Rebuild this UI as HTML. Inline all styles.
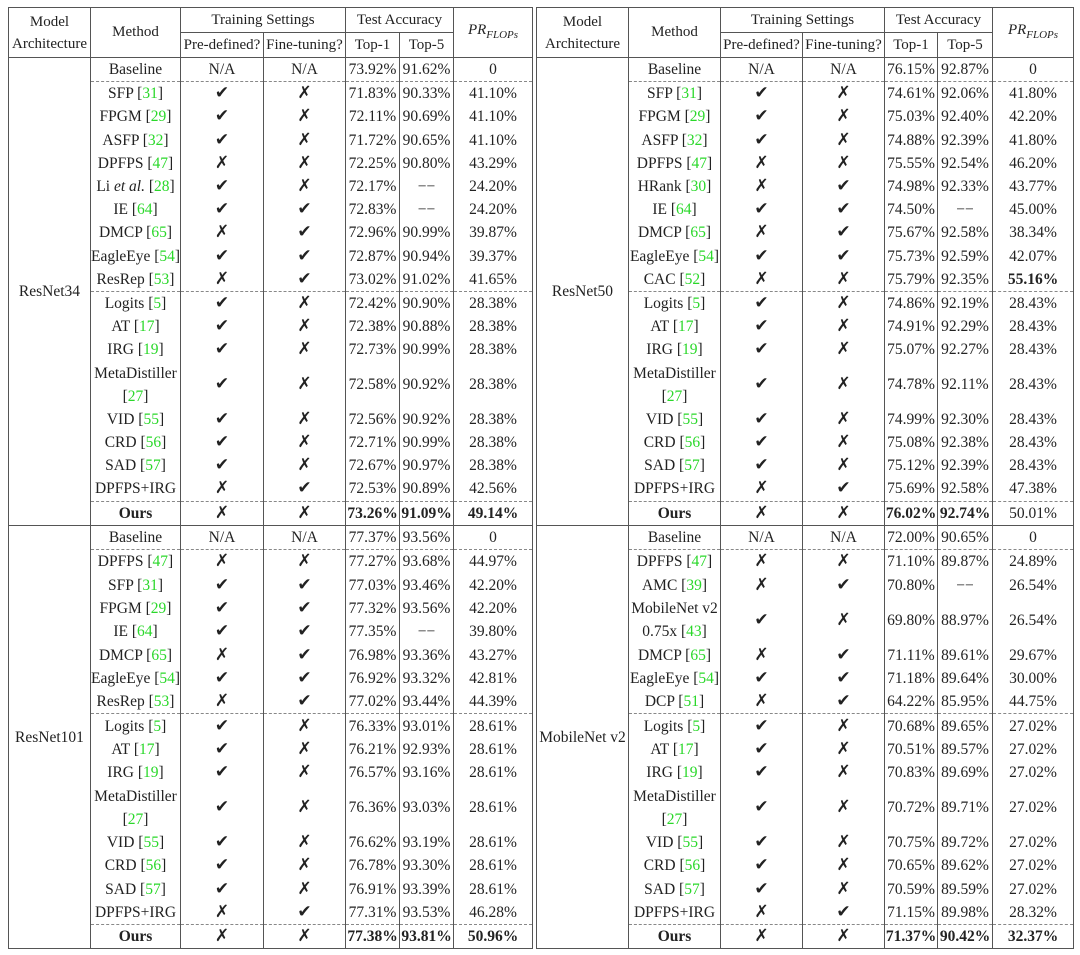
<!DOCTYPE html>
<html><head><meta charset="utf-8"><style>
body{margin:0;width:1080px;height:955px;background:#fff;position:relative;overflow:hidden;font-family:"Liberation Serif",serif;font-size:15.5px;color:#222}
table{position:absolute;border-collapse:collapse;table-layout:fixed}
td{border-left:1px solid #555;border-right:1px solid #555;text-align:center;vertical-align:middle;padding:0;white-space:nowrap;line-height:23px;overflow:visible}
tr.r td{height:23.2px}
tr.m td{height:46.4px}
.b tr.r td{height:23.3px}
.b tr.m td{height:46.6px}
tr.h td{border-top:1px solid #555;border-bottom:1px solid #555;height:24px;font-size:15px}
tr.d td{border-top:1.5px dashed #888}
tr.d td.mod{border-top:none}
td.mod{border-bottom:1px solid #555}
.g{color:#2ad82a}
.c,.x{font-family:"DejaVu Sans",sans-serif;font-size:17px;font-weight:bold;font-style:italic}
.bo{font-weight:bold}
table{border:1px solid #555}
.pr{font-style:italic;font-size:16px}
.pr sub{font-size:11px}
</style></head><body>

<!-- top-left -->
<table style="left:8px;top:7px;width:524px">
<colgroup><col style="width:82px"><col style="width:90px"><col style="width:83px"><col style="width:82px"><col style="width:54px"><col style="width:54px"><col style="width:79px"></colgroup>
<tr class="h"><td rowspan="2" style="line-height:22px">Model<br>Architecture</td><td rowspan="2">Method</td><td colspan="2">Training Settings</td><td colspan="2">Test Accuracy</td><td rowspan="2" class="pr">PR<sub>FLOPs</sub></td></tr>
<tr class="h"><td>Pre-defined?</td><td>Fine-tuning?</td><td>Top-1</td><td>Top-5</td></tr>
<tr class="r"><td rowspan="20" class="mod">ResNet34</td><td>Baseline</td><td>N/A</td><td>N/A</td><td>73.92%</td><td>91.62%</td><td>0</td></tr>
<tr class="r d"><td>SFP [<span class="g">31</span>]</td><td class="c">✔</td><td class="x">✗</td><td>71.83%</td><td>90.33%</td><td>41.10%</td></tr>
<tr class="r"><td>FPGM [<span class="g">29</span>]</td><td class="c">✔</td><td class="x">✗</td><td>72.11%</td><td>90.69%</td><td>41.10%</td></tr>
<tr class="r"><td>ASFP [<span class="g">32</span>]</td><td class="c">✔</td><td class="x">✗</td><td>71.72%</td><td>90.65%</td><td>41.10%</td></tr>
<tr class="r"><td>DPFPS [<span class="g">47</span>]</td><td class="x">✗</td><td class="x">✗</td><td>72.25%</td><td>90.80%</td><td>43.29%</td></tr>
<tr class="r"><td>Li <i>et al.</i> [<span class="g">28</span>]</td><td class="c">✔</td><td class="x">✗</td><td>72.17%</td><td>−−</td><td>24.20%</td></tr>
<tr class="r"><td>IE [<span class="g">64</span>]</td><td class="c">✔</td><td class="c">✔</td><td>72.83%</td><td>−−</td><td>24.20%</td></tr>
<tr class="r"><td>DMCP [<span class="g">65</span>]</td><td class="x">✗</td><td class="c">✔</td><td>72.96%</td><td>90.99%</td><td>39.87%</td></tr>
<tr class="r"><td>EagleEye [<span class="g">54</span>]</td><td class="c">✔</td><td class="c">✔</td><td>72.87%</td><td>90.94%</td><td>39.37%</td></tr>
<tr class="r"><td>ResRep [<span class="g">53</span>]</td><td class="x">✗</td><td class="c">✔</td><td>73.02%</td><td>91.02%</td><td>41.65%</td></tr>
<tr class="r d"><td>Logits [<span class="g">5</span>]</td><td class="c">✔</td><td class="x">✗</td><td>72.42%</td><td>90.90%</td><td>28.38%</td></tr>
<tr class="r"><td>AT [<span class="g">17</span>]</td><td class="c">✔</td><td class="x">✗</td><td>72.38%</td><td>90.88%</td><td>28.38%</td></tr>
<tr class="r"><td>IRG [<span class="g">19</span>]</td><td class="c">✔</td><td class="x">✗</td><td>72.73%</td><td>90.99%</td><td>28.38%</td></tr>
<tr class="m"><td>MetaDistiller<br>[<span class="g">27</span>]</td><td class="c">✔</td><td class="x">✗</td><td>72.58%</td><td>90.92%</td><td>28.38%</td></tr>
<tr class="r"><td>VID [<span class="g">55</span>]</td><td class="c">✔</td><td class="x">✗</td><td>72.56%</td><td>90.92%</td><td>28.38%</td></tr>
<tr class="r"><td>CRD [<span class="g">56</span>]</td><td class="c">✔</td><td class="x">✗</td><td>72.71%</td><td>90.99%</td><td>28.38%</td></tr>
<tr class="r"><td>SAD [<span class="g">57</span>]</td><td class="c">✔</td><td class="x">✗</td><td>72.67%</td><td>90.97%</td><td>28.38%</td></tr>
<tr class="r"><td>DPFPS+IRG</td><td class="x">✗</td><td class="c">✔</td><td>72.53%</td><td>90.89%</td><td>42.56%</td></tr>
<tr class="r d"><td class="bo">Ours</td><td class="x">✗</td><td class="x">✗</td><td class="bo">73.26%</td><td class="bo">91.09%</td><td class="bo">49.14%</td></tr>
</table>

<!-- top-right -->
<table style="left:536px;top:7px;width:537px">
<colgroup><col style="width:92px"><col style="width:92px"><col style="width:82px"><col style="width:82px"><col style="width:53px"><col style="width:55px"><col style="width:81px"></colgroup>
<tr class="h"><td rowspan="2" style="line-height:22px">Model<br>Architecture</td><td rowspan="2">Method</td><td colspan="2">Training Settings</td><td colspan="2">Test Accuracy</td><td rowspan="2" class="pr">PR<sub>FLOPs</sub></td></tr>
<tr class="h"><td>Pre-defined?</td><td>Fine-tuning?</td><td>Top-1</td><td>Top-5</td></tr>
<tr class="r"><td rowspan="20" class="mod">ResNet50</td><td>Baseline</td><td>N/A</td><td>N/A</td><td>76.15%</td><td>92.87%</td><td>0</td></tr>
<tr class="r d"><td>SFP [<span class="g">31</span>]</td><td class="c">✔</td><td class="x">✗</td><td>74.61%</td><td>92.06%</td><td>41.80%</td></tr>
<tr class="r"><td>FPGM [<span class="g">29</span>]</td><td class="c">✔</td><td class="x">✗</td><td>75.03%</td><td>92.40%</td><td>42.20%</td></tr>
<tr class="r"><td>ASFP [<span class="g">32</span>]</td><td class="c">✔</td><td class="x">✗</td><td>74.88%</td><td>92.39%</td><td>41.80%</td></tr>
<tr class="r"><td>DPFPS [<span class="g">47</span>]</td><td class="x">✗</td><td class="x">✗</td><td>75.55%</td><td>92.54%</td><td>46.20%</td></tr>
<tr class="r"><td>HRank [<span class="g">30</span>]</td><td class="x">✗</td><td class="c">✔</td><td>74.98%</td><td>92.33%</td><td>43.77%</td></tr>
<tr class="r"><td>IE [<span class="g">64</span>]</td><td class="c">✔</td><td class="c">✔</td><td>74.50%</td><td>−−</td><td>45.00%</td></tr>
<tr class="r"><td>DMCP [<span class="g">65</span>]</td><td class="x">✗</td><td class="c">✔</td><td>75.67%</td><td>92.58%</td><td>38.34%</td></tr>
<tr class="r"><td>EagleEye [<span class="g">54</span>]</td><td class="c">✔</td><td class="c">✔</td><td>75.73%</td><td>92.59%</td><td>42.07%</td></tr>
<tr class="r"><td>CAC [<span class="g">52</span>]</td><td class="x">✗</td><td class="x">✗</td><td>75.79%</td><td>92.35%</td><td class="bo">55.16%</td></tr>
<tr class="r d"><td>Logits [<span class="g">5</span>]</td><td class="c">✔</td><td class="x">✗</td><td>74.86%</td><td>92.19%</td><td>28.43%</td></tr>
<tr class="r"><td>AT [<span class="g">17</span>]</td><td class="c">✔</td><td class="x">✗</td><td>74.91%</td><td>92.29%</td><td>28.43%</td></tr>
<tr class="r"><td>IRG [<span class="g">19</span>]</td><td class="c">✔</td><td class="x">✗</td><td>75.07%</td><td>92.27%</td><td>28.43%</td></tr>
<tr class="m"><td>MetaDistiller<br>[<span class="g">27</span>]</td><td class="c">✔</td><td class="x">✗</td><td>74.78%</td><td>92.11%</td><td>28.43%</td></tr>
<tr class="r"><td>VID [<span class="g">55</span>]</td><td class="c">✔</td><td class="x">✗</td><td>74.99%</td><td>92.30%</td><td>28.43%</td></tr>
<tr class="r"><td>CRD [<span class="g">56</span>]</td><td class="c">✔</td><td class="x">✗</td><td>75.08%</td><td>92.38%</td><td>28.43%</td></tr>
<tr class="r"><td>SAD [<span class="g">57</span>]</td><td class="c">✔</td><td class="x">✗</td><td>75.12%</td><td>92.39%</td><td>28.43%</td></tr>
<tr class="r"><td>DPFPS+IRG</td><td class="x">✗</td><td class="c">✔</td><td>75.69%</td><td>92.58%</td><td>47.38%</td></tr>
<tr class="r d"><td class="bo">Ours</td><td class="x">✗</td><td class="x">✗</td><td class="bo">76.02%</td><td class="bo">92.74%</td><td>50.01%</td></tr>
</table>

<!-- bottom-left -->
<table class="b" style="left:8px;top:525px;width:524px">
<colgroup><col style="width:82px"><col style="width:90px"><col style="width:83px"><col style="width:82px"><col style="width:54px"><col style="width:54px"><col style="width:79px"></colgroup>
<tr class="r"><td rowspan="18" class="mod">ResNet101</td><td>Baseline</td><td>N/A</td><td>N/A</td><td>77.37%</td><td>93.56%</td><td>0</td></tr>
<tr class="r d"><td>DPFPS [<span class="g">47</span>]</td><td class="x">✗</td><td class="x">✗</td><td>77.27%</td><td>93.68%</td><td>44.97%</td></tr>
<tr class="r"><td>SFP [<span class="g">31</span>]</td><td class="c">✔</td><td class="c">✔</td><td>77.03%</td><td>93.46%</td><td>42.20%</td></tr>
<tr class="r"><td>FPGM [<span class="g">29</span>]</td><td class="c">✔</td><td class="c">✔</td><td>77.32%</td><td>93.56%</td><td>42.20%</td></tr>
<tr class="r"><td>IE [<span class="g">64</span>]</td><td class="c">✔</td><td class="c">✔</td><td>77.35%</td><td>−−</td><td>39.80%</td></tr>
<tr class="r"><td>DMCP [<span class="g">65</span>]</td><td class="x">✗</td><td class="c">✔</td><td>76.98%</td><td>93.36%</td><td>43.27%</td></tr>
<tr class="r"><td>EagleEye [<span class="g">54</span>]</td><td class="c">✔</td><td class="c">✔</td><td>76.92%</td><td>93.32%</td><td>42.81%</td></tr>
<tr class="r"><td>ResRep [<span class="g">53</span>]</td><td class="x">✗</td><td class="c">✔</td><td>77.02%</td><td>93.44%</td><td>44.39%</td></tr>
<tr class="r d"><td>Logits [<span class="g">5</span>]</td><td class="c">✔</td><td class="x">✗</td><td>76.33%</td><td>93.01%</td><td>28.61%</td></tr>
<tr class="r"><td>AT [<span class="g">17</span>]</td><td class="c">✔</td><td class="x">✗</td><td>76.21%</td><td>92.93%</td><td>28.61%</td></tr>
<tr class="r"><td>IRG [<span class="g">19</span>]</td><td class="c">✔</td><td class="x">✗</td><td>76.57%</td><td>93.16%</td><td>28.61%</td></tr>
<tr class="m"><td>MetaDistiller<br>[<span class="g">27</span>]</td><td class="c">✔</td><td class="x">✗</td><td>76.36%</td><td>93.03%</td><td>28.61%</td></tr>
<tr class="r"><td>VID [<span class="g">55</span>]</td><td class="c">✔</td><td class="x">✗</td><td>76.62%</td><td>93.19%</td><td>28.61%</td></tr>
<tr class="r"><td>CRD [<span class="g">56</span>]</td><td class="c">✔</td><td class="x">✗</td><td>76.78%</td><td>93.30%</td><td>28.61%</td></tr>
<tr class="r"><td>SAD [<span class="g">57</span>]</td><td class="c">✔</td><td class="x">✗</td><td>76.91%</td><td>93.39%</td><td>28.61%</td></tr>
<tr class="r"><td>DPFPS+IRG</td><td class="x">✗</td><td class="c">✔</td><td>77.31%</td><td>93.53%</td><td>46.28%</td></tr>
<tr class="r d"><td class="bo">Ours</td><td class="x">✗</td><td class="x">✗</td><td class="bo">77.38%</td><td class="bo">93.81%</td><td class="bo">50.96%</td></tr>
</table>

<!-- bottom-right -->
<table class="b" style="left:536px;top:525px;width:537px">
<colgroup><col style="width:92px"><col style="width:92px"><col style="width:82px"><col style="width:82px"><col style="width:53px"><col style="width:55px"><col style="width:81px"></colgroup>
<tr class="r"><td rowspan="16" class="mod">MobileNet v2</td><td>Baseline</td><td>N/A</td><td>N/A</td><td>72.00%</td><td>90.65%</td><td>0</td></tr>
<tr class="r d"><td>DPFPS [<span class="g">47</span>]</td><td class="x">✗</td><td class="x">✗</td><td>71.10%</td><td>89.87%</td><td>24.89%</td></tr>
<tr class="r"><td>AMC [<span class="g">39</span>]</td><td class="x">✗</td><td class="c">✔</td><td>70.80%</td><td>−−</td><td>26.54%</td></tr>
<tr class="m"><td>MobileNet v2<br>0.75x [<span class="g">43</span>]</td><td class="c">✔</td><td class="x">✗</td><td>69.80%</td><td>88.97%</td><td>26.54%</td></tr>
<tr class="r"><td>DMCP [<span class="g">65</span>]</td><td class="x">✗</td><td class="c">✔</td><td>71.11%</td><td>89.61%</td><td>29.67%</td></tr>
<tr class="r"><td>EagleEye [<span class="g">54</span>]</td><td class="c">✔</td><td class="c">✔</td><td>71.18%</td><td>89.64%</td><td>30.00%</td></tr>
<tr class="r"><td>DCP [<span class="g">51</span>]</td><td class="x">✗</td><td class="c">✔</td><td>64.22%</td><td>85.95%</td><td>44.75%</td></tr>
<tr class="r d"><td>Logits [<span class="g">5</span>]</td><td class="c">✔</td><td class="x">✗</td><td>70.68%</td><td>89.65%</td><td>27.02%</td></tr>
<tr class="r"><td>AT [<span class="g">17</span>]</td><td class="c">✔</td><td class="x">✗</td><td>70.51%</td><td>89.57%</td><td>27.02%</td></tr>
<tr class="r"><td>IRG [<span class="g">19</span>]</td><td class="c">✔</td><td class="x">✗</td><td>70.83%</td><td>89.69%</td><td>27.02%</td></tr>
<tr class="m"><td>MetaDistiller<br>[<span class="g">27</span>]</td><td class="c">✔</td><td class="x">✗</td><td>70.72%</td><td>89.71%</td><td>27.02%</td></tr>
<tr class="r"><td>VID [<span class="g">55</span>]</td><td class="c">✔</td><td class="x">✗</td><td>70.75%</td><td>89.72%</td><td>27.02%</td></tr>
<tr class="r"><td>CRD [<span class="g">56</span>]</td><td class="c">✔</td><td class="x">✗</td><td>70.65%</td><td>89.62%</td><td>27.02%</td></tr>
<tr class="r"><td>SAD [<span class="g">57</span>]</td><td class="c">✔</td><td class="x">✗</td><td>70.59%</td><td>89.59%</td><td>27.02%</td></tr>
<tr class="r"><td>DPFPS+IRG</td><td class="x">✗</td><td class="c">✔</td><td>71.15%</td><td>89.98%</td><td>28.32%</td></tr>
<tr class="r d"><td class="bo">Ours</td><td class="x">✗</td><td class="x">✗</td><td class="bo">71.37%</td><td class="bo">90.42%</td><td class="bo">32.37%</td></tr>
</table>
</body></html>
